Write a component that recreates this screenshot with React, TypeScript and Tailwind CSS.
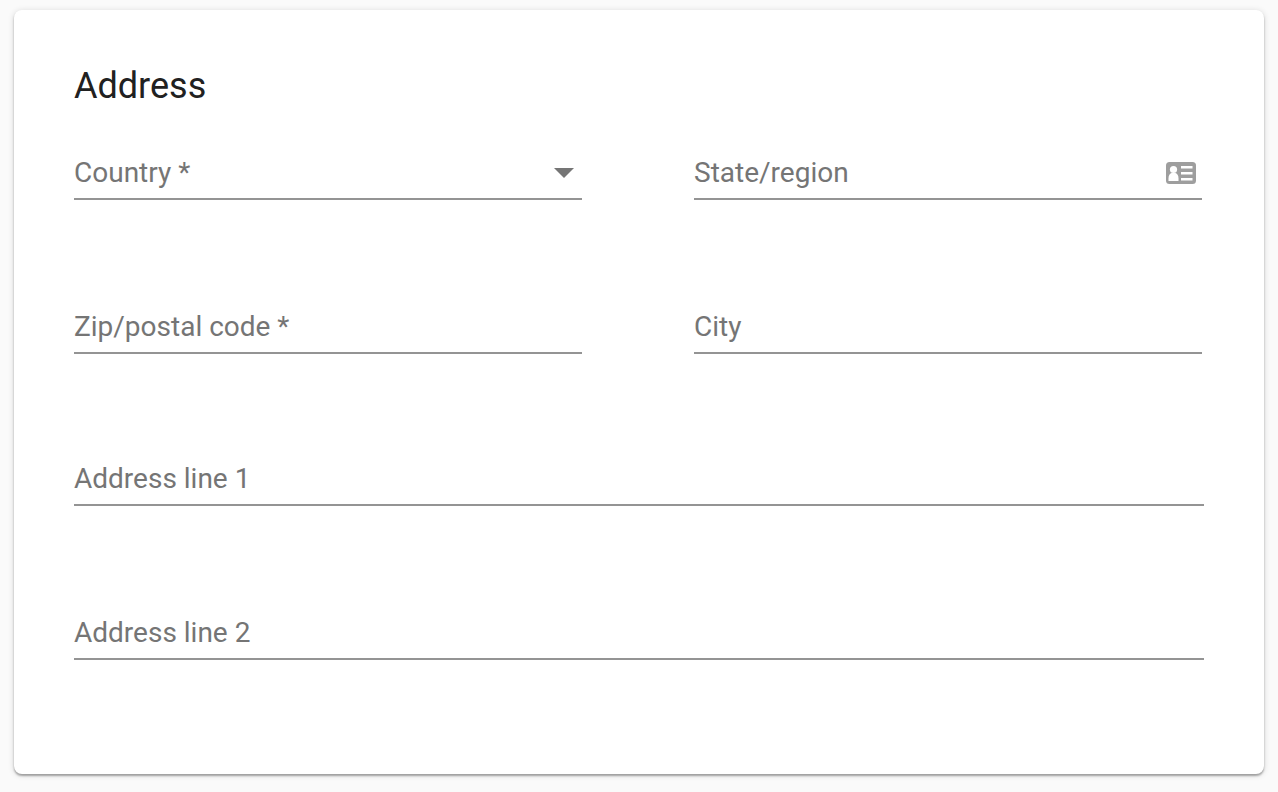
import React, { useState } from 'react';

type FieldProps = {
  id: string;
  label: string;
  required?: boolean;
  icon?: React.ReactNode;
};

const ContactCardIcon = () => (
  <svg viewBox="0 0 30 22" className="mr-1.5 h-[22px] w-[30px]" aria-hidden="true">
    <rect width="30" height="22" rx="3.500" fill="#9e9e9e" />
    <circle cx="7.500" cy="7.500" r="3.600" fill="#fff" />
    <path d="M2.500 19v-2.500c0-3 1-4.500 3-5.500h4c2 1 3 2.500 3 5.500V19z" fill="#fff" />
    <path d="M15 4h11.500v2.500H15zM15 10h11.500v2.500H15zM15 16h11.500v2.500H15z" fill="#fff" />
  </svg>
);

const TextField = ({ id, label, required, icon }: FieldProps) => {
  const [value, setValue] = useState('');

  return (
    <div className="relative flex h-13 items-center border-b-2 border-[#949494]">
      {!value && (
        <label htmlFor={id} className="pointer-events-none absolute left-0 text-[#757575]">
          {label}
          {required && ' *'}
        </label>
      )}
      <input
        id={id}
        value={value}
        required={required}
        aria-label={label}
        onChange={(e) => setValue(e.target.value)}
        className="min-w-0 flex-1 bg-transparent text-[#212121] outline-none"
      />
      {icon}
    </div>
  );
};

const CountrySelect = () => {
  const [country, setCountry] = useState('');

  return (
    <div className="relative flex h-13 items-center border-b-2 border-[#949494]">
      {!country && (
        <label htmlFor="country" className="pointer-events-none absolute left-0 text-[#757575]">
          Country *
        </label>
      )}
      <select
        id="country"
        value={country}
        required
        aria-label="Country"
        onChange={(e) => setCountry(e.target.value)}
        className="absolute inset-0 w-full appearance-none bg-transparent text-[#212121] outline-none"
      >
        <option value="" />
      </select>
      <svg viewBox="0 0 20 10" className="pointer-events-none mr-2 ml-auto h-[10px] w-5" aria-hidden="true">
        <path d="M0 0h20L10 10z" fill="#757575" />
      </svg>
    </div>
  );
};

const App = () => {
  return (
    <main className="min-h-screen bg-[#fafafa] px-3.5 pt-2.5 pb-[18px] font-[Roboto,sans-serif]">
      <form className="rounded-lg bg-white px-[60px] pt-[52px] pb-[114px] text-[28px] leading-10 shadow-[0_2px_2px_rgba(0,0,0,0.3),0_1px_6px_rgba(0,0,0,0.15)]">
        <h1 className="text-4xl leading-12 text-[#212121]">Address</h1>
        <div className="mt-[38px] grid grid-cols-2 gap-x-28 gap-y-[102px] pr-0.5">
          <CountrySelect />
          <TextField id="state" label="State/region" icon={<ContactCardIcon />} />
          <TextField id="zip" label="Zip/postal code" required />
          <TextField id="city" label="City" />
        </div>
        <div className="mt-[100px] grid gap-y-[102px]">
          <TextField id="address1" label="Address line 1" />
          <TextField id="address2" label="Address line 2" />
        </div>
      </form>
    </main>
  );
};

export default App;
